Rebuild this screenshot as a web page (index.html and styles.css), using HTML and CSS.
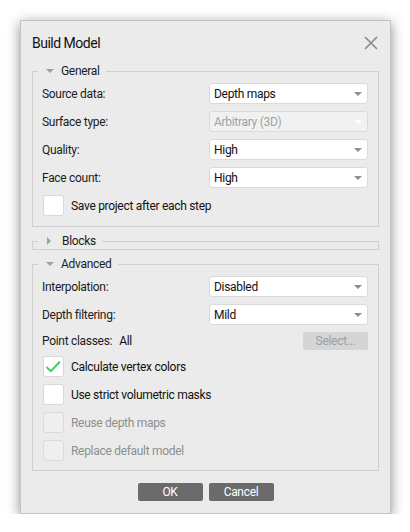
FILE: index.html
```html
<!DOCTYPE html>
<html>
<head>
<meta charset="utf-8">
<link rel="stylesheet" href="styles.css">
</head>
<body>
<div class="dialog">
  <div class="titlebar">
    <span class="title">Build Model</span>
    <svg class="close" width="14" height="14" viewBox="0 0 14 14"><path d="M1 1L13 13M13 1L1 13" stroke="#8c8c8c" stroke-width="1.7" fill="none"/></svg>
  </div>

  <fieldset class="group">
    <legend><span class="tri down"></span>General</legend>
    <div class="rows">
      <div class="row"><span class="label">Source data:</span><div class="combo"><span>Depth maps</span><span class="arrow"></span></div></div>
      <div class="row"><span class="label">Surface type:</span><div class="combo disabled"><span>Arbitrary (3D)</span><span class="arrow"></span></div></div>
      <div class="row"><span class="label">Quality:</span><div class="combo"><span>High</span><span class="arrow"></span></div></div>
      <div class="row"><span class="label">Face count:</span><div class="combo"><span>High</span><span class="arrow"></span></div></div>
      <div class="check"><span class="box"></span><span>Save project after each step</span></div>
    </div>
  </fieldset>

  <fieldset class="group collapsed">
    <legend><span class="tri right"></span>Blocks</legend>
  </fieldset>

  <fieldset class="group adv">
    <legend><span class="tri down"></span>Advanced</legend>
    <div class="rows">
      <div class="row"><span class="label">Interpolation:</span><div class="combo"><span>Disabled</span><span class="arrow"></span></div></div>
      <div class="row"><span class="label">Depth filtering:</span><div class="combo"><span>Mild</span><span class="arrow"></span></div></div>
      <div class="row point"><span class="label"><span>Point classes:</span><span class="value">All</span></span><span class="select">Select...</span></div>
      <div class="check"><span class="box"><svg width="21" height="21" viewBox="0 0 21 21"><path d="M3.5 11L7.8 15.2L16.8 5.8" stroke="#3dcc6c" stroke-width="2" fill="none"/></svg></span><span>Calculate vertex colors</span></div>
      <div class="check"><span class="box"></span><span>Use strict volumetric masks</span></div>
      <div class="check disabled"><span class="box"></span><span>Reuse depth maps</span></div>
      <div class="check disabled"><span class="box"></span><span>Replace default model</span></div>
    </div>
  </fieldset>

  <div class="buttons">
    <span class="btn">OK</span>
    <span class="btn">Cancel</span>
  </div>
</div>
</body>
</html>
```

FILE: styles.css
```css
html, body {
  margin: 0;
  padding: 0;
  background: #ffffff;
}

body {
  font-family: Roboto, "Liberation Sans", sans-serif;
  font-size: 12px;
  letter-spacing: -0.3px;
  color: #1c1c1c;
}

.dialog {
  margin: 20px 0 0 20px;
  width: 371px;
  box-sizing: border-box;
  background: #ebebeb;
  border: 1px solid #c4c4c4;
  box-shadow: 0 3px 12px rgba(0, 0, 0, 0.45);
  padding: 0 11px 12px 11px;
}

.titlebar {
  height: 42px;
  display: flex;
  align-items: center;
  justify-content: space-between;
}

.title {
  font-size: 14px;
  letter-spacing: -0.5px;
  color: #111;
  padding-top: 2px;
}

.close {
  margin-right: 1px;
  margin-top: 1px;
}

.group {
  margin: 0;
  border: 1px solid #d0d0d0;
  padding: 4px 10px 10px 9px;
  min-width: 0;
}

.group.collapsed {
  margin-top: 6px;
  padding: 0 10px 0 9px;
}

.group.adv {
  margin-top: 6px;
  padding-bottom: 9px;
}

legend {
  margin-left: -4px;
  padding: 0 6px 0 8px;
  line-height: 16px;
  height: 16px;
  color: #1c1c1c;
}

.tri {
  display: inline-block;
  width: 0;
  height: 0;
  vertical-align: middle;
}

.tri.down {
  border-left: 4px solid transparent;
  border-right: 4px solid transparent;
  border-top: 4px solid #a0a0a0;
  margin-top: -2px;
  margin-right: 7px;
}

.tri.right {
  border-top: 4px solid transparent;
  border-bottom: 4px solid transparent;
  border-left: 4px solid #a0a0a0;
  margin-top: -2px;
  margin-left: 1px;
  margin-right: 11px;
}

.rows {
  display: flex;
  flex-direction: column;
  gap: 7px;
}

.row {
  display: grid;
  grid-template-columns: 1fr 159px;
  align-items: center;
  height: 21px;
}

.row.point {
  height: 17px;
}

.combo {
  height: 21px;
  box-sizing: border-box;
  background: #ffffff;
  border: 1px solid #dadada;
  border-radius: 3px;
  display: flex;
  align-items: center;
  justify-content: space-between;
  padding: 0 5px 0 4px;
  color: #111;
}

.combo.disabled {
  background: #f1f1f1;
  color: #a2a2a2;
}

.arrow {
  width: 0;
  height: 0;
  border-left: 4px solid transparent;
  border-right: 4px solid transparent;
  border-top: 4px solid #8e8e8e;
  margin-top: 1px;
}

.combo.disabled .arrow {
  border-top-color: #ffffff;
}

.label .value {
  margin-left: 7px;
  color: #111;
}

.select {
  justify-self: end;
  width: 65px;
  height: 18px;
  box-sizing: border-box;
  background: #d5d5d5;
  border-radius: 2px;
  color: #9e9e9e;
  display: flex;
  align-items: center;
  justify-content: center;
}

.check {
  display: flex;
  align-items: center;
  height: 21px;
  color: #111;
}

.box {
  width: 21px;
  height: 21px;
  box-sizing: border-box;
  margin-left: 1px;
  margin-right: 7px;
  background: #ffffff;
  border: 1px solid #d8d8d8;
  border-radius: 3px;
  display: flex;
}

.box svg {
  margin: -1px;
}

.check.disabled {
  color: #8e8e8e;
}

.check.disabled .box {
  background: #efefef;
  border-color: #dadada;
}

.buttons {
  display: flex;
  justify-content: center;
  gap: 6px;
  margin-top: 12px;
}

.btn {
  width: 65px;
  height: 18px;
  box-sizing: border-box;
  background: #6b6b6b;
  border-radius: 2px;
  color: #ffffff;
  display: flex;
  align-items: center;
  justify-content: center;
}
```
